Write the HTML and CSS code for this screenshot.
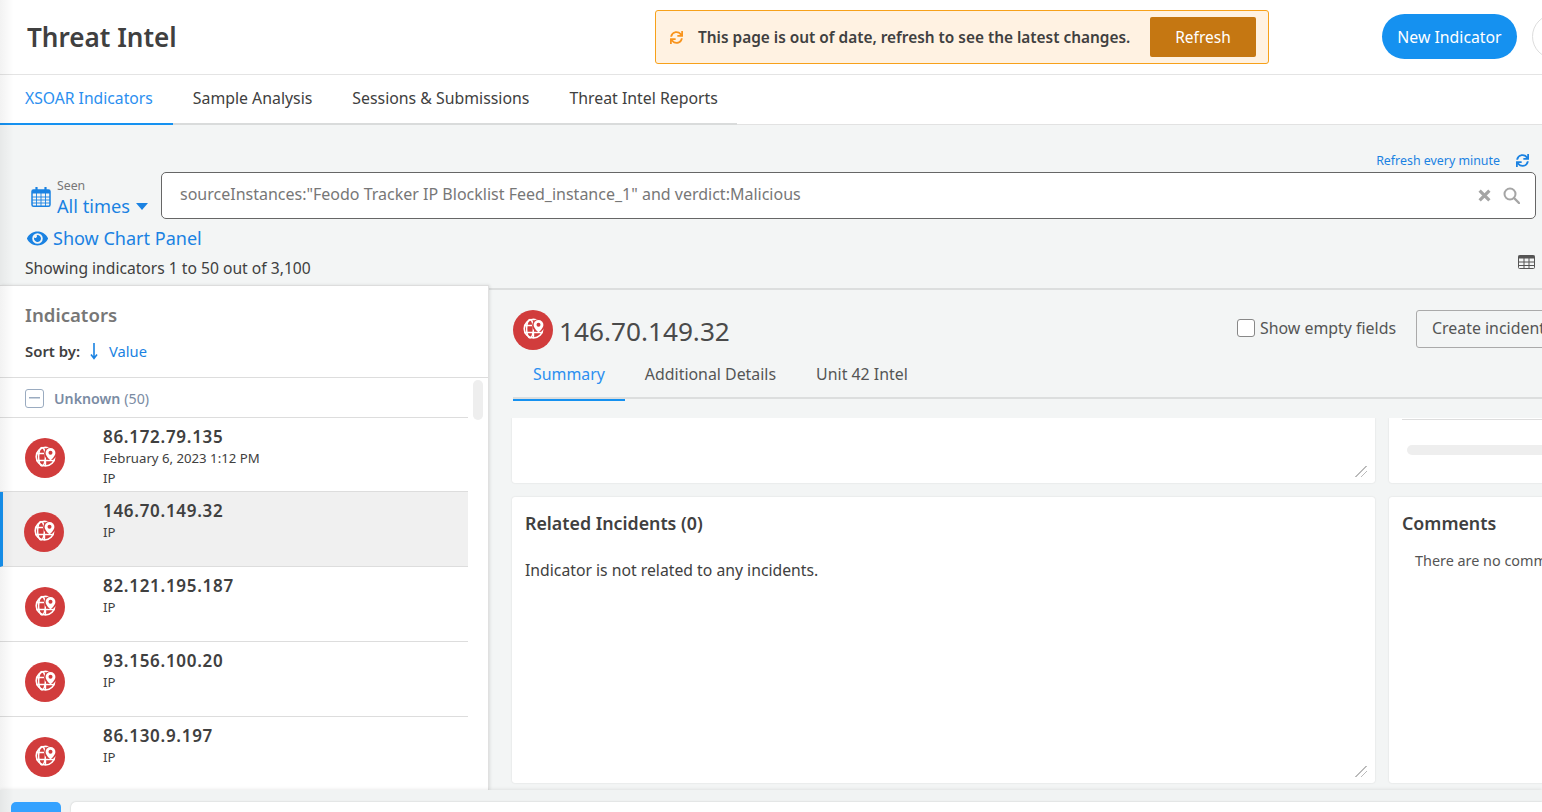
FILE: index.html
```html
<!DOCTYPE html>
<html lang="en">
<head>
    <meta charset="UTF-8">
    <meta name="viewport" content="width=device-width, initial-scale=1.0">
    <title>Threat Intel</title>
    <link rel="stylesheet" href="styles.css">
</head>
<body>

    <svg class="defs" width="0" height="0">
        <symbol id="sync" viewBox="0 0 512 512">
            <path fill="currentColor" d="M440.65 12.57l4 82.77A247.16 247.16 0 0 0 255.83 8C134.73 8 33.91 94.92 12.29 209.82A12 12 0 0 0 24.09 224h49.05a12 12 0 0 0 11.67-9.26 175.91 175.91 0 0 1 317-56.94l-101.46-4.86a12 12 0 0 0-12.57 12v47.41a12 12 0 0 0 12 12H500a12 12 0 0 0 12-12V12a12 12 0 0 0-12-12h-47.37a12 12 0 0 0-11.98 12.57zM255.83 432a175.61 175.61 0 0 1-146-77.8l101.8 4.87a12 12 0 0 0 12.57-12v-47.4a12 12 0 0 0-12-12H12a12 12 0 0 0-12 12V500a12 12 0 0 0 12 12h47.35a12 12 0 0 0 12-12.6l-4.15-82.57A247.17 247.17 0 0 0 255.83 504c121.11 0 221.93-86.92 243.55-201.82a12 12 0 0 0-11.8-14.18h-49.05a12 12 0 0 0-11.67 9.26A175.86 175.86 0 0 1 255.83 432z"/>
        </symbol>
        <symbol id="ip" viewBox="0 0 40 40">
            <circle cx="20" cy="20" r="20" fill="#d13c3c"/>
            <circle cx="20.500" cy="18.700" r="9.300" fill="none" stroke="#fff" stroke-width="1.600"/>
            <ellipse cx="17" cy="18.700" rx="3.400" ry="9.300" fill="none" stroke="#fff" stroke-width="1.500"/>
            <path d="M11.500 15.500h10M11.500 22.500h18M20.500 22v6" stroke="#fff" stroke-width="1.400"/>
            <circle cx="25.500" cy="15.500" r="6.400" fill="#d13c3c"/>
            <path fill="#fff" d="M25.500 10a4.900 4.900 0 0 0-4.900 4.900c0 2.900 4.900 7.600 4.900 7.600s4.900-4.700 4.900-7.600a4.900 4.900 0 0 0-4.900-4.900z"/>
            <circle cx="25.500" cy="14.800" r="2" fill="#d13c3c"/>
        </symbol>
    </svg>

    <header class="top-bar">
        <h1 class="page-title">Threat Intel</h1>
        <div class="update-banner">
            <svg class="update-icon"><use href="#sync"/></svg>
            <span class="update-text">This page is out of date, refresh to see the latest changes.</span>
            <button class="update-btn" type="button">Refresh</button>
        </div>
        <button class="new-btn" type="button">New Indicator</button>
        <div class="round-btn"></div>
    </header>

    <nav class="main-tabs">
        <div class="main-tabs-inner">
            <a class="main-tab active">XSOAR Indicators</a>
            <a class="main-tab">Sample Analysis</a>
            <a class="main-tab">Sessions &amp; Submissions</a>
            <a class="main-tab">Threat Intel Reports</a>
        </div>
    </nav>

    <section class="toolbar">
        <div class="refresh-row">
            <span class="refresh-label">Refresh every minute</span>
            <svg class="refresh-icon"><use href="#sync"/></svg>
        </div>
        <div class="search-row">
            <svg class="calendar" viewBox="0 0 20 20">
                <rect x="1" y="3" width="18" height="16.200" rx="1.500" fill="none" stroke="currentColor" stroke-width="1.500"/>
                <rect x="1" y="3" width="18" height="3.500" fill="currentColor"/>
                <path d="M5.500 0.500v4M14.500 0.500v4" stroke="currentColor" stroke-width="2.200" stroke-linecap="round"/>
                <path d="M1 10h18M1 13h18M1 16h18M5.500 6v13M10 6v13M14.500 6v13" stroke="currentColor" stroke-width="0.900"/>
            </svg>
            <div class="time-picker">
                <span class="time-label">Seen</span>
                <span class="time-value">All times <i class="caret"></i></span>
            </div>
            <div class="search-box">
                <span class="search-query">sourceInstances:"Feodo Tracker IP Blocklist Feed_instance_1" and verdict:Malicious</span>
                <svg class="clear-icon" viewBox="0 0 12 12"><path d="M1.500 1.500l9 9M10.500 1.500l-9 9" stroke="currentColor" stroke-width="3"/></svg>
                <svg class="search-icon" viewBox="0 0 17 17"><circle cx="7" cy="7" r="5.500" fill="none" stroke="currentColor" stroke-width="2"/><path d="M11 11l5 5" stroke="currentColor" stroke-width="2.400" stroke-linecap="round"/></svg>
            </div>
        </div>
        <a class="chart-link">
            <svg class="eye-icon" viewBox="0 0 576 512"><path fill="currentColor" d="M572.52 241.4C518.29 135.59 410.93 64 288 64S57.68 135.64 3.48 241.41a32.35 32.35 0 0 0 0 29.19C57.71 376.41 165.07 448 288 448s230.32-71.64 284.52-177.41a32.35 32.35 0 0 0 0-29.19zM288 400a144 144 0 1 1 144-144 143.93 143.93 0 0 1-144 144zm0-240a95.31 95.31 0 0 0-25.31 3.79 47.85 47.85 0 0 1-66.9 66.9A95.78 95.78 0 1 0 288 160z"/></svg>
            Show Chart Panel
        </a>
        <div class="count-row">
            <span class="count-text">Showing indicators 1 to 50 out of 3,100</span>
            <svg class="table-icon" viewBox="0 0 17 14">
                <rect x="0.500" y="0.500" width="16" height="13" rx="1" fill="none" stroke="currentColor"/>
                <rect x="0.500" y="0.500" width="16" height="3" fill="currentColor"/>
                <path d="M1 7h15M1 10.500h15M6 3v10M11 3v10" stroke="currentColor"/>
            </svg>
        </div>
    </section>

    <main class="content">
        <aside class="list-panel">
            <div class="list-head">
                <h2 class="list-title">Indicators</h2>
                <div class="sort-row">
                    <span class="sort-label">Sort by:</span>
                    <svg class="sort-arrow" viewBox="0 0 8 18"><path d="M4 1v15M1 12.500l3 4 3-4" fill="none" stroke="currentColor" stroke-width="1.600"/></svg>
                    <span class="sort-value">Value</span>
                </div>
            </div>
            <div class="list-body">
                <div class="group-row">
                    <span class="group-box"></span>
                    <span class="group-name">Unknown</span>
                    <span class="group-count">(50)</span>
                </div>
                <div class="list-thumb"></div>

                <div class="item item-first">
                    <svg class="item-icon"><use href="#ip"/></svg>
                    <div class="item-text">
                        <div class="item-value">86.172.79.135</div>
                        <div class="item-sub">February 6, 2023 1:12 PM</div>
                        <div class="item-sub">IP</div>
                    </div>
                </div>
                <div class="item selected">
                    <svg class="item-icon"><use href="#ip"/></svg>
                    <div class="item-text">
                        <div class="item-value">146.70.149.32</div>
                        <div class="item-sub">IP</div>
                    </div>
                </div>
                <div class="item">
                    <svg class="item-icon"><use href="#ip"/></svg>
                    <div class="item-text">
                        <div class="item-value">82.121.195.187</div>
                        <div class="item-sub">IP</div>
                    </div>
                </div>
                <div class="item">
                    <svg class="item-icon"><use href="#ip"/></svg>
                    <div class="item-text">
                        <div class="item-value">93.156.100.20</div>
                        <div class="item-sub">IP</div>
                    </div>
                </div>
                <div class="item">
                    <svg class="item-icon"><use href="#ip"/></svg>
                    <div class="item-text">
                        <div class="item-value">86.130.9.197</div>
                        <div class="item-sub">IP</div>
                    </div>
                </div>
            </div>
        </aside>

        <section class="detail">
            <div class="detail-head">
                <svg class="detail-icon"><use href="#ip"/></svg>
                <span class="detail-title">146.70.149.32</span>
                <label class="empty-toggle"><span class="empty-box"></span>Show empty fields</label>
                <button class="incident-btn" type="button">Create incident</button>
            </div>
            <div class="detail-tabs">
                <a class="detail-tab active">Summary</a>
                <a class="detail-tab">Additional Details</a>
                <a class="detail-tab">Unit 42 Intel</a>
            </div>
            <div class="cards">
                <div class="card card-short">
                    <i class="resize"></i>
                </div>
                <div class="card card-short">
                    <div class="clip-line"></div>
                    <div class="clip-bar"></div>
                </div>
                <div class="card card-tall">
                    <h3 class="card-title">Related Incidents (0)</h3>
                    <p class="card-text">Indicator is not related to any incidents.</p>
                    <i class="resize"></i>
                </div>
                <div class="card card-tall">
                    <h3 class="card-title">Comments</h3>
                    <p class="comments-text">There are no comments yet.</p>
                </div>
            </div>
        </section>
    </main>

    <footer class="bottom-bar">
        <div class="bottom-btn"></div>
        <div class="bottom-input"></div>
    </footer>

    <div class="edge-shade"></div>

</body>
</html>
```

FILE: styles.css
```css
* {
    box-sizing: border-box;
}

html, body {
    height: 100%;
}

body {
    font-family: "Noto Sans", Arial, sans-serif;
    background-color: #f3f5f5;
    color: #404040;
    margin: 0;
    height: 812px;
    overflow: hidden;
    display: flex;
    flex-direction: column;
}

.defs {
    position: absolute;
}

button {
    font-family: inherit;
    cursor: pointer;
}

/* top bar */
.top-bar {
    height: 75px;
    flex: none;
    background-color: #fff;
    border-bottom: 1px solid #e4e4e4;
    display: flex;
    align-items: center;
    padding-left: 27px;
    box-shadow: 0 1px 2px rgba(0, 0, 0, 0.06);
}

.page-title {
    width: 628px;
    flex: none;
    margin: 0;
    font-size: 26.100px;
    font-weight: 600;
    color: #404040;
}

.update-banner {
    width: 614px;
    height: 54px;
    flex: none;
    display: flex;
    align-items: center;
    padding: 0 12px 0 14px;
    background-color: #fff2e2;
    border: 1px solid #f7a11a;
    border-radius: 3px;
}

.update-icon {
    width: 13px;
    height: 13px;
    color: #f8941d;
    flex: none;
}

.update-text {
    margin-left: 15px;
    font-size: 15.400px;
    font-weight: 600;
    white-space: nowrap;
}

.update-btn {
    margin-left: auto;
    width: 106px;
    height: 40px;
    background-color: #c57712;
    border: none;
    border-radius: 2px;
    color: #fff;
    font-size: 15.500px;
}

.new-btn {
    width: 135px;
    height: 45px;
    flex: none;
    margin-left: 113px;
    margin-top: -1px;
    background-color: #1591f0;
    border: none;
    border-radius: 23px;
    color: #fff;
    font-size: 15.800px;
}

.round-btn {
    width: 45px;
    height: 45px;
    flex: none;
    margin-left: 15px;
    margin-top: -1px;
    background-color: #fff;
    border: 1px solid #ddd;
    border-radius: 50%;
}

/* page tabs */
.main-tabs {
    height: 50px;
    flex: none;
    background-color: #fff;
    border-bottom: 1px solid #e2e2e2;
}

.main-tabs-inner {
    display: flex;
    width: 737px;
    height: 50px;
    border-bottom: 2px solid #d9dbdb;
}

.main-tab {
    height: 50px;
    padding: 12px 20px 0;
    font-size: 15.850px;
    color: #404040;
    white-space: nowrap;
}

.main-tab.active {
    padding: 12px 20px 0 25px;
    font-size: 15.700px;
    color: #2b8ff0;
    border-bottom: 2px solid #1591f0;
}

/* toolbar above the list */
.toolbar {
    height: 160px;
    flex: none;
    display: flex;
    flex-direction: column;
    padding: 26px 6px 0 25px;
}

.refresh-row {
    height: 18px;
    display: flex;
    align-items: center;
    justify-content: flex-end;
    padding-right: 7px;
}

.refresh-label {
    font-size: 12.400px;
    color: #1a82e2;
}

.refresh-icon {
    width: 13px;
    height: 13px;
    margin-left: 16px;
    color: #1a82e2;
}

.search-row {
    height: 47px;
    margin-top: 3px;
    display: flex;
    align-items: center;
}

.calendar {
    width: 20px;
    height: 20px;
    margin: 2px 0 0 6px;
    flex: none;
    color: #1a82e2;
}

.time-picker {
    width: 104px;
    flex: none;
    margin-left: 6px;
    display: flex;
    flex-direction: column;
    padding-top: 7px;
}

.time-label {
    font-size: 12.300px;
    line-height: 14px;
    color: #777;
}

.time-value {
    font-size: 18.200px;
    line-height: 26px;
    color: #1a82e2;
    white-space: nowrap;
}

.caret {
    display: inline-block;
    margin-left: 1px;
    vertical-align: 3px;
    border-left: 6.500px solid transparent;
    border-right: 6.500px solid transparent;
    border-top: 7px solid #1a82e2;
}

.search-box {
    flex: 1;
    height: 47px;
    display: flex;
    align-items: center;
    padding: 0 15px 0 18px;
    background-color: #fff;
    border: 1px solid #666;
    border-radius: 5px;
}

.search-query {
    flex: 1;
    padding-bottom: 4px;
    font-size: 16px;
    color: #777;
    white-space: nowrap;
}

.clear-icon {
    width: 13px;
    height: 13px;
    color: #a5a5a5;
}

.search-icon {
    width: 17px;
    height: 17px;
    margin-left: 12px;
    color: #a5a5a5;
}

.chart-link {
    height: 30px;
    margin-top: 4px;
    display: flex;
    align-items: center;
    padding-left: 2px;
    font-size: 18.050px;
    color: #1a82e2;
    white-space: nowrap;
}

.eye-icon {
    width: 21px;
    height: 19px;
    margin-right: 5px;
}

.count-row {
    height: 30px;
    display: flex;
    align-items: center;
    justify-content: space-between;
    padding-right: 1px;
}

.count-text {
    font-size: 15.650px;
}

.table-icon {
    width: 17px;
    height: 14px;
    color: #555;
    margin-bottom: 12px;
}

/* list and detail */
.content {
    flex: 1;
    min-height: 0;
    display: flex;
}

.list-panel {
    width: 489px;
    flex: none;
    display: flex;
    flex-direction: column;
    background-color: #fff;
    border-right: 1px solid #e0e0e0;
    box-shadow: 1px 0 3px rgba(0, 0, 0, 0.1);
    position: relative;
    z-index: 1;
}

.list-head {
    height: 93px;
    flex: none;
    padding: 15px 25px 0;
    border-bottom: 1px solid #ddd;
    border-top: 1px solid #ddd;
}

.list-title {
    margin: 0;
    font-size: 18.600px;
    line-height: 28px;
    font-weight: 600;
    color: #777;
}

.sort-row {
    margin-top: 10px;
    display: flex;
    align-items: center;
    height: 24px;
}

.sort-label {
    font-size: 14.900px;
    font-weight: 600;
}

.sort-arrow {
    width: 8px;
    height: 18px;
    margin-left: 10px;
    color: #1a82e2;
}

.sort-value {
    margin-left: 11px;
    font-size: 14.700px;
    color: #1a82e2;
}

.list-body {
    flex: 1;
    width: 468px;
    overflow: hidden;
}

.group-row {
    height: 40px;
    display: flex;
    align-items: center;
    padding: 1px 0 0 25px;
    border-bottom: 1px solid #ddd;
    font-size: 14.200px;
    color: #7a8ba3;
}

.group-box {
    width: 19px;
    height: 19px;
    margin-right: 10px;
    border: 1.500px solid #9aabc0;
    border-radius: 3px;
    background: linear-gradient(#9aabc0, #9aabc0) center / 11px 1.500px no-repeat;
}

.group-name {
    font-weight: 600;
}

.group-count {
    margin-left: 4px;
}

.list-thumb {
    position: absolute;
    left: 473px;
    top: 95px;
    width: 10px;
    height: 40px;
    background-color: #eee;
    border-radius: 5px;
}

.item {
    height: 75px;
    display: flex;
    padding-left: 25px;
    border-bottom: 1px solid #ddd;
}

.item-first {
    height: 74px;
}

.item.selected {
    background-color: #f0f0f0;
    border-left: 3px solid #1591f0;
    padding-left: 21px;
}

.item.selected .item-text {
    margin-left: 39px;
}

.item-icon {
    width: 40px;
    height: 40px;
    flex: none;
    margin-top: 20px;
}

.item-text {
    margin-left: 38px;
    padding-top: 7px;
}

.item-value {
    font-size: 17px;
    line-height: 23px;
    font-weight: 600;
    letter-spacing: 0.700px;
}

.item-sub {
    font-size: 13.200px;
    line-height: 20px;
}

.detail {
    flex: 1;
    min-width: 0;
    margin-top: 3px;
    border-top: 2px solid #dcdede;
    padding-left: 23px;
    overflow: hidden;
}

.detail-head {
    height: 59px;
    display: flex;
    align-items: flex-start;
    padding-top: 20px;
    white-space: nowrap;
}

.detail-icon {
    width: 40px;
    height: 40px;
    flex: none;
    margin-left: 1px;
}

.detail-title {
    width: 678px;
    flex: none;
    margin-left: 6px;
    font-size: 26.200px;
    line-height: 42px;
    color: #4a4a4a;
}

.empty-toggle {
    width: 179px;
    flex: none;
    margin-top: 6px;
    display: flex;
    align-items: center;
    font-size: 15.900px;
    line-height: 24px;
    color: #555;
}

.empty-box {
    width: 18px;
    height: 18px;
    margin-right: 5px;
    background-color: #fff;
    border: 1px solid #888;
    border-radius: 3px;
}

.incident-btn {
    width: 160px;
    height: 38px;
    flex: none;
    padding: 0 0 2px 15px;
    text-align: left;
    background: none;
    border: 1px solid #aaa;
    border-radius: 3px;
    font-size: 15.900px;
    color: #555;
}

.detail-tabs {
    height: 50px;
    display: flex;
    margin-left: 1px;
    padding-top: 2px;
    width: 1100px;
    border-bottom: 2px solid #dcdede;
}

.detail-tab {
    height: 50px;
    padding: 12px 20px 0;
    font-size: 15.900px;
    color: #555;
    white-space: nowrap;
}

.detail-tab.active {
    color: #2b8ff0;
    border-bottom: 2px solid #1591f0;
}

.cards {
    display: grid;
    grid-template-columns: 863px 300px;
    grid-template-rows: 65px 286px;
    column-gap: 14px;
    row-gap: 14px;
    margin-top: 19px;
}

.card {
    position: relative;
    background-color: #fff;
    border-radius: 0 0 3px 3px;
    box-shadow: 0 0 2px rgba(0, 0, 0, 0.12);
    padding: 13px 13px;
}

.card-tall {
    border-radius: 3px;
}

/* the upper cards are scrolled under the tab line */
.card-short {
    padding: 0;
    clip-path: inset(0 -3px -3px -3px);
}

.clip-line {
    height: 2px;
    margin-left: 13px;
    border-bottom: 1px solid #ddd;
}

.clip-bar {
    height: 10px;
    margin: 25px 0 0 18px;
    background-color: #eee;
    border-radius: 5px;
}

.card-title {
    margin: 0;
    font-size: 17.800px;
    line-height: 26px;
    font-weight: 600;
}

.card-text {
    margin: 22px 0 0;
    font-size: 15.750px;
    line-height: 24px;
}

.comments-text {
    margin: 13px 0 0 13px;
    font-size: 14.400px;
    line-height: 24px;
    color: #555;
    white-space: nowrap;
}

.resize {
    position: absolute;
    right: 8px;
    bottom: 6px;
    width: 12px;
    height: 11px;
    background: linear-gradient(135deg, transparent 46%, #bbb 46%, #bbb 54%, transparent 54%, transparent 70%, #bbb 70%, #bbb 78%, transparent 78%);
}

/* bottom command line */
.bottom-bar {
    height: 22px;
    flex: none;
    display: flex;
    gap: 10px;
    padding: 12px 0 0 11px;
    background-color: #f1f3f3;
    box-shadow: 0 -1px 3px rgba(0, 0, 0, 0.08);
    position: relative;
    z-index: 2;
}

.bottom-btn {
    width: 50px;
    background-color: #35a2ff;
    border-radius: 5px 5px 0 0;
}

.bottom-input {
    flex: 1;
    background-color: #fff;
    border-radius: 5px 0 0 0;
    box-shadow: 0 0 2px rgba(0, 0, 0, 0.2);
}

/* shadow from the collapsed side menu */
.edge-shade {
    position: absolute;
    left: 0;
    top: 0;
    bottom: 0;
    width: 14px;
    background: linear-gradient(to right, rgba(0, 0, 0, 0.05), rgba(0, 0, 0, 0));
    pointer-events: none;
    z-index: 3;
}
```
